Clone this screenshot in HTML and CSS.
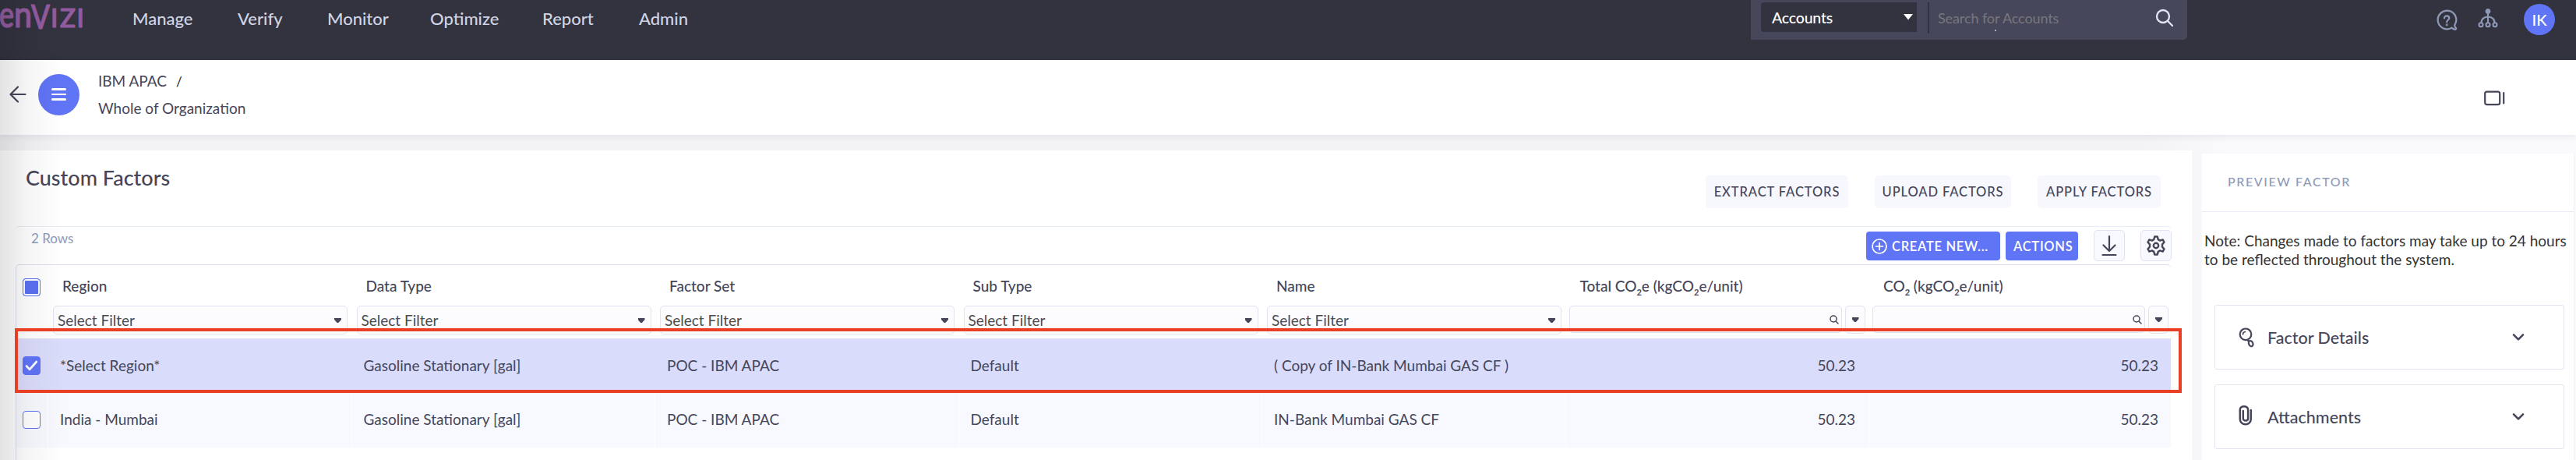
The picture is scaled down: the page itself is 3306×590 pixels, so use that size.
FILE: index.html
```html
<!DOCTYPE html>
<html lang="en">
<head>
<meta charset="utf-8">
<title>Custom Factors</title>
<link rel="stylesheet" href="styles.css">
</head>
<body>
<div class="page">
  <header class="topbar">
    <svg class="logo" width="112" height="44" viewBox="0 0 112 44">
      <g class="logo-text">
        <text x="-1" y="35" font-size="46" textLength="19" lengthAdjust="spacingAndGlyphs">e</text>
        <text x="18" y="35" font-size="47" textLength="23" lengthAdjust="spacingAndGlyphs">n</text>
        <text x="40" y="37" font-size="42" textLength="24" lengthAdjust="spacingAndGlyphs">V</text>
        <text x="65" y="35" font-size="33">I</text>
        <text x="77" y="35" font-size="33" textLength="20" lengthAdjust="spacingAndGlyphs">Z</text>
        <text x="98.500" y="35" font-size="33">I</text>
      </g>
    </svg>
    <nav class="nav">
      <a>Manage</a><a>Verify</a><a>Monitor</a><a>Optimize</a><a>Report</a><a>Admin</a>
    </nav>
    <div class="search">
      <div class="search-type"><span>Accounts</span><svg width="12" height="8" viewBox="0 0 12 8"><path d="M0 0h12L6 7.500z" fill="#fff"/></svg></div>
      <i class="search-divider"></i>
      <span class="search-hint">Search for Accounts<i class="dot"></i></span>
      <svg class="search-icon" width="24" height="24" viewBox="0 0 24 24" fill="none" stroke="#e2e5f3" stroke-width="2.300" stroke-linecap="round"><circle cx="10" cy="10" r="8"/><path d="M15.800 15.800 22 22"/></svg>
    </div>
    <div class="tools">
      <svg width="28" height="28" viewBox="0 0 28 28" fill="none" stroke="#8f9ab8" stroke-width="2.200" stroke-linecap="round" stroke-linejoin="round"><path d="M20.500 23.600A11.800 11.800 0 1 1 24.300 20c-.2 1.300.2 2.500 1.500 3.800.7.900.2 2-1 2-1.600-.1-3-.9-4.300-2.200z"/><path d="M11 11.300c0-4 6.300-3.900 6.300 0 0 2.200-3.100 2.300-3.100 5"/><circle cx="14.200" cy="19.800" r=".5"/></svg>
      <svg class="tree" width="26" height="26" viewBox="0 0 26 26" fill="none" stroke="#8f9ab8" stroke-width="2.100"><circle cx="13" cy="4.500" r="3" fill="#8f9ab8" stroke-width="1"/><path d="M13 6v13M4.500 19c0-10 17-10 17 0"/><circle cx="4" cy="21.800" r="2.500"/><circle cx="13" cy="21.800" r="2.500"/><circle cx="22" cy="21.800" r="2.500"/></svg>
      <div class="avatar">IK</div>
    </div>
  </header>

  <section class="crumbbar">
    <svg class="back" width="22" height="22" viewBox="0 0 22 22" fill="none" stroke="#45465a" stroke-width="2.200" stroke-linecap="round" stroke-linejoin="round"><path d="M20.500 11H1.500M11 1.500 1.500 11l9.500 9.500"/></svg>
    <div class="menu"><i></i><i></i><i></i></div>
    <div class="crumbs">
      <div><span class="org">IBM APAC</span><span class="slash">/</span></div>
      <div class="whole">Whole of Organization</div>
    </div>
    <svg class="panel-toggle" width="28" height="20" viewBox="0 0 28 20" fill="none" stroke="#45465a" stroke-width="2.200" stroke-linecap="round"><rect x="1.200" y="1.600" width="19" height="16.600" rx="2.500"/><path d="M25.200 3v13.600"/></svg>
  </section>

  <div class="content">
    <main class="card">
      <div class="card-head">
        <h1>Custom Factors</h1>
        <div class="factor-actions">
          <button class="b1">EXTRACT FACTORS</button><button class="b2">UPLOAD FACTORS</button><button class="b3">APPLY FACTORS</button>
        </div>
      </div>
      <div class="toolbar">
        <span class="rows">2 Rows</span>
        <button class="primary create"><svg width="22" height="22" viewBox="0 0 22 22" fill="none" stroke="#fff" stroke-width="1.700" stroke-linecap="round"><circle cx="11" cy="11" r="9"/><path d="M11 6.500v9M6.500 11h9"/></svg><span>CREATE NEW...</span></button>
        <button class="primary actions"><span>ACTIONS</span></button>
        <button class="icon-btn download"><svg width="22" height="30" viewBox="0 0 22 30" fill="none" stroke="#45465a" stroke-width="2.200" stroke-linecap="round" stroke-linejoin="round"><path d="M11 3v19M3.500 14.500 11 22l7.500-7.500M2.500 27h17"/></svg></button>
        <button class="icon-btn settings"><svg width="26" height="26" viewBox="0 0 26 26" fill="none" stroke="#45465a" stroke-width="2.400" stroke-linejoin="round"><path d="M11.200 1.500h3.600l.9 3.600 2.500 1.500 3.500-1.200 1.800 3.300-2.500 2.600v3.400l2.500 2.600-1.800 3.300-3.500-1.200-2.500 1.500-.9 3.600h-3.600l-.9-3.600-2.500-1.500-3.500 1.200-1.800-3.300L5 14.700v-3.400L2.500 8.700l1.800-3.300 3.500 1.200 2.500-1.500z"/><circle cx="13" cy="13" r="3.200"/></svg></button>
      </div>

      <div class="table">
        <div class="tr thead">
          <div class="pick"><i class="box partial"></i></div>
          <div class="th"><b>Region</b><div class="filter"><span>Select Filter</span><i class="caret"></i></div></div>
          <div class="th"><b>Data Type</b><div class="filter"><span>Select Filter</span><i class="caret"></i></div></div>
          <div class="th"><b>Factor Set</b><div class="filter"><span>Select Filter</span><i class="caret"></i></div></div>
          <div class="th"><b>Sub Type</b><div class="filter"><span>Select Filter</span><i class="caret"></i></div></div>
          <div class="th"><b>Name</b><div class="filter"><span>Select Filter</span><i class="caret"></i></div></div>
          <div class="th"><b>Total CO<sub>2</sub>e (kgCO<sub>2</sub>e/unit)</b><div class="numeric"><div class="find"><svg width="12" height="12" viewBox="0 0 12 12" fill="none" stroke="#45465a" stroke-width="1.500" stroke-linecap="round"><circle cx="5" cy="5" r="4"/><path d="m8 8 3 3"/></svg></div><div class="op"><i class="caret"></i></div></div></div>
          <div class="th"><b>CO<sub>2</sub> (kgCO<sub>2</sub>e/unit)</b><div class="numeric"><div class="find"><svg width="12" height="12" viewBox="0 0 12 12" fill="none" stroke="#45465a" stroke-width="1.500" stroke-linecap="round"><circle cx="5" cy="5" r="4"/><path d="m8 8 3 3"/></svg></div><div class="op"><i class="caret"></i></div></div></div>
        </div>
        <div class="tr row selected">
          <div class="pick"><i class="box checked"><svg width="17" height="14" viewBox="0 0 17 14" fill="none" stroke="#fff" stroke-width="2.700" stroke-linecap="round" stroke-linejoin="round"><path d="m2 7.500 4 4.300L14.800 2"/></svg></i></div>
          <div class="td">*Select Region*</div><div class="td">Gasoline Stationary [gal]</div><div class="td">POC - IBM APAC</div><div class="td">Default</div><div class="td">( Copy of IN-Bank Mumbai GAS CF )</div><div class="td num">50.23</div><div class="td num">50.23</div>
        </div>
        <div class="tr row">
          <div class="pick"><i class="box"></i></div>
          <div class="td">India - Mumbai</div><div class="td">Gasoline Stationary [gal]</div><div class="td">POC - IBM APAC</div><div class="td">Default</div><div class="td">IN-Bank Mumbai GAS CF</div><div class="td num">50.23</div><div class="td num">50.23</div>
        </div>
      </div>
    </main>

    <aside class="side">
      <h2>PREVIEW FACTOR</h2>
      <p class="note">Note: Changes made to factors may take up to 24 hours<br>to be reflected throughout the system.</p>
      <div class="fold">
        <svg width="24" height="28" viewBox="0 0 24 28" fill="none" stroke="#45465a" stroke-width="2.200" stroke-linecap="round"><circle cx="10" cy="9.800" r="7.300"/><path d="M6.500 10c0-2 1.200-3.300 3-3.500" stroke-width="1.600"/><path d="m12.500 17 1.500 2"/><ellipse cx="16.700" cy="21.700" rx="2.600" ry="3.700" transform="rotate(-25 16.700 21.700)"/></svg>
        <span>Factor Details</span>
        <svg class="chev" width="16" height="11" viewBox="0 0 16 11" fill="none" stroke="#45465a" stroke-width="2.600" stroke-linecap="round" stroke-linejoin="round"><path d="m2 2.300 6 6 6-6"/></svg>
      </div>
      <div class="fold">
        <svg class="clip" width="24" height="28" viewBox="0 0 24 28" fill="none" stroke="#45465a" stroke-width="2.500" stroke-linecap="round"><path d="M16.800 7v11.500a7 6.800 0 0 1-14 0V6.500c0-5.800 10.300-5.800 10.300 0v11.200c0 3.800-6.300 3.800-6.300 0V8"/></svg>
        <span>Attachments</span>
        <svg class="chev" width="16" height="11" viewBox="0 0 16 11" fill="none" stroke="#45465a" stroke-width="2.600" stroke-linecap="round" stroke-linejoin="round"><path d="m2 2.300 6 6 6-6"/></svg>
      </div>
    </aside>
  </div>
  <div class="edge-shade"></div>
  <div class="highlight"></div>
</div>
</body>
</html>
```
FILE: styles.css
```css
* { box-sizing: border-box; }
body { margin: 0; font-family: Lato, "Noto Sans", sans-serif; font-size: 19px; color: #45465a; }
.page { position: relative; width: 3306px; height: 590px; overflow: hidden; background: #f3f3f6; }
button { font: inherit; color: inherit; border: 0; margin: 0; padding: 0; white-space: nowrap; }
i { display: block; }
svg { display: block; flex: none; }

/* Top navigation */
.topbar { display: flex; align-items: flex-start; height: 77px; background: #32333f; }
.logo { margin-right: 58px; overflow: visible; }
.logo-text { fill: #925b9f; font-family: Lato, sans-serif; font-weight: 500; stroke: #925b9f; stroke-width: 1.2; stroke-linejoin: round; }
.nav { display: grid; grid-template-columns: 135px 115px 132px 144px 124px 100px; width: 2077px; line-height: 26px; padding-top: 11px; font-size: 22px; font-weight: 500; color: #d0d4e4; }
.search { display: flex; width: 560px; height: 51px; padding: 3px 0 0 13px; background: #46475a; border-radius: 0 0 5px 0; }
.search-type { display: flex; align-items: center; justify-content: space-between; width: 200px; height: 38px; padding: 0 5px 0 14px; background: #32333f; border-radius: 4px 0 0 4px; color: #fff; font-size: 19.500px; font-weight: 500; letter-spacing: -.2px; }
.search-divider { width: 2px; height: 40px; margin: 0 11px 0 14px; background: #32333f; }
.search-hint { position: relative; width: 279px; line-height: 41px; font-size: 18px; letter-spacing: -.1px; color: #77777d; }
.dot { position: absolute; left: 73px; top: 35px; width: 2px; height: 2px; background: #aaaab0; }
.search-icon { margin: 8px 0 0; }
.tools { display: flex; margin-left: 319px; }
.tools > svg { margin-top: 12px; }
.tools .tree { margin: 10px 0 0 26px; }
.avatar { width: 40px; height: 40px; margin: 5px 0 0 33px; border-radius: 50%; background: #6074f6; color: #fff; text-align: center; line-height: 41px; font-size: 20px; font-weight: 500; }

/* Breadcrumb bar */
.crumbbar { position: relative; display: flex; align-items: center; height: 96px; padding: 0 90px 0 12px; background: #fff; box-shadow: 0 1px 9px rgba(60, 60, 100, .12); }
.back { margin-top: -8px; }
.menu { display: flex; flex-direction: column; align-items: center; justify-content: center; gap: 4px; width: 53px; height: 53px; margin: -8px 24px 0 15px; border-radius: 50%; background: #6074f6; }
.menu i { width: 19px; height: 2.700px; border-radius: 2px; background: #fff; }
.crumbs { flex: 1; line-height: 34px; margin-top: -8px; }
.slash { margin-left: 12px; color: #222; font-size: 17px; }
.panel-toggle { margin-top: 1px; }

/* Content */
.content { display: flex; height: 417px; background: linear-gradient(90deg, #f3f3f6 2750px, #fafafc 2860px); }
.card { width: 2813px; margin-top: 20px; padding: 0 26px 0 20px; background: #fff; }
.card-head { display: flex; justify-content: space-between; height: 97px; padding: 0 14px 0 13px; }
h1 { margin: 18px 0 0; font-size: 27px; font-weight: 500; line-height: 34px; }
.factor-actions { display: flex; gap: 34px; margin-top: 32px; font-size: 16.500px; font-weight: 500; }
.factor-actions button { height: 42px; border-radius: 5px; background: #f7f8fe; letter-spacing: .9px; }
.b1 { width: 183px; } .b2 { width: 175px; } .b3 { width: 158px; }
.toolbar { display: flex; align-items: flex-start; height: 49px; border-top: 1px solid #e4ecf6; border-radius: 5px 5px 0 0; }
.rows { flex: 1; padding: 5px 0 0 20px; line-height: 20px; font-size: 17px; color: #8e9ab9; }
.primary { display: flex; align-items: center; height: 37px; margin-top: 6px; border-radius: 4px; background: #6074f6; color: #fff; font-size: 16.500px; font-weight: 600; letter-spacing: .7px; }
.create { width: 172px; padding-left: 6px; gap: 5px; }
.actions { width: 93px; margin-left: 7px; padding-left: 10px; }
.icon-btn { display: flex; align-items: center; justify-content: center; width: 40px; height: 40px; margin: 4px 0 0 20px; border: 1px solid #e0e3f0; border-radius: 5px; background: #f8f9fe; }

/* Table */
.table { height: 251px; margin-right: 1px; border: 1px solid #dcdfec; border-width: 1px 0 0 1px; border-radius: 5px 5px 0 0; }
.tr { display: grid; grid-template-columns: 40px repeat(6, 389.500px) 1fr; }
.thead { height: 95px; border-bottom: 1px solid #e0e2ee; }
.pick { padding-left: 8px; }
.box { display: flex; align-items: center; justify-content: center; width: 23px; height: 23px; border: 1.500px solid #6074f6; border-radius: 4px; background: #fff; }
.thead .box { margin-top: 17px; }
.partial { background: #5b70f2; box-shadow: inset 0 0 0 2px #fff; }
.checked { background: #6074f6; height: 24px; }
.th { padding: 16px 0 0 7px; }
.th b { display: block; height: 36px; padding-left: 12px; line-height: 22px; font-weight: 500; white-space: nowrap; }
sub { font-size: 11px; line-height: 0; vertical-align: -5px; font-weight: 700; }
.filter { display: flex; justify-content: space-between; width: 378px; height: 37px; padding: 6px 7px 0 5px; border: 1px solid #e0e3f0; border-radius: 5px; background: #fcfcff; line-height: 24px; color: #4c4c50; }
.caret { width: 9px; height: 6px; background: #45465a; clip-path: polygon(0 0, 100% 0, 100% 35%, 60% 100%, 40% 100%, 0 35%); }
.filter .caret { margin-top: 9px; }
.numeric { display: flex; gap: 4px; margin-left: -2px; }
.find { width: 350px; height: 35px; padding: 11px 3px 0 0; border: 1px solid #e0e3f0; border-radius: 5px; background: #fcfcff; }
.find svg { margin-left: auto; }
.op { width: 26px; height: 36px; padding: 14px 0 0 8px; border: 1px solid #e0e3f0; border-radius: 5px; background: #fcfcff; }
.row { height: 70px; background: #f8f9fe; }
.row .pick { padding-top: 23px; }
.td { padding-left: 15px; border-left: 1px solid #fff; line-height: 68px; white-space: nowrap; }
.selected { height: 69px; background: #dadcfb; }
.selected .td { border-color: transparent; line-height: 67px; }
.selected .pick { padding-top: 22px; }
.num { text-align: right; padding-right: 17px; }
.num:last-child { padding-right: 16px; }

/* Preview panel */
.side { width: 478px; margin: 24px 0 0 13px; background: #fff; border-right: 1px solid #f1f1f5; }
h2 { height: 75px; margin: 0; padding: 26px 0 0 33px; border-bottom: 1px solid #e8e9f5; font-size: 16px; line-height: 20px; font-weight: 500; letter-spacing: 1.600px; color: #8e9ab9; }
.note { height: 119px; margin: 0; padding: 25px 0 0 3px; line-height: 24px; color: #333; white-space: nowrap; }
.fold { display: flex; align-items: center; width: 449px; height: 83px; margin: 0 0 19px 16px; padding: 0 50px 0 29px; border: 1px solid #e3e5f0; border-radius: 3px; font-size: 21.500px; font-weight: 500; }
.fold span { flex: 1; margin-left: 14px; }
.clip { margin-top: -4px; }

/* Overlays */
.edge-shade { position: absolute; left: 0; top: 0; width: 84px; height: 590px; background: linear-gradient(90deg, rgba(0, 0, 0, .11), rgba(0, 0, 0, .035) 45%, transparent); }
.highlight { position: absolute; left: 19px; top: 421px; width: 2781px; height: 83px; border: 4px solid #e93f25; }
```
